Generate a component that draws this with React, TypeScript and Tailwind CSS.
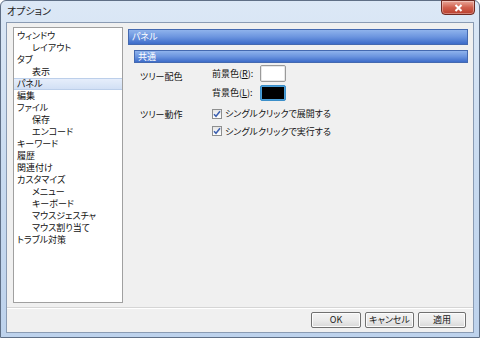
import React from "react";

const font = "[font-family:'Noto_Sans_CJK_JP','Noto_Sans',sans-serif] [font-feature-settings:'palt']";

type Item = { label: string; level: number; selected?: boolean };
const items: Item[] = [
  { label: "ウィンドウ", level: 0 },
  { label: "レイアウト", level: 1 },
  { label: "タブ", level: 0 },
  { label: "表示", level: 1 },
  { label: "パネル", level: 0, selected: true },
  { label: "編集", level: 0 },
  { label: "ファイル", level: 0 },
  { label: "保存", level: 1 },
  { label: "エンコード", level: 1 },
  { label: "キーワード", level: 0 },
  { label: "履歴", level: 0 },
  { label: "関連付け", level: 0 },
  { label: "カスタマイズ", level: 0 },
  { label: "メニュー", level: 1 },
  { label: "キーボード", level: 1 },
  { label: "マウスジェスチャ", level: 1 },
  { label: "マウス割り当て", level: 1 },
  { label: "トラブル対策", level: 0 },
];

function Check() {
  return (
    <span className="w-[10px] h-[10px] border border-[#8e8f8f] bg-gradient-to-b from-[#e6e6e6] to-[#ffffff] flex items-center justify-center shrink-0">
      <svg width="8" height="8" viewBox="0 0 8 8">
        <path d="M1 4.2 L3 6.3 L7 1.3" fill="none" stroke="#3b5fb0" strokeWidth="1.5" />
      </svg>
    </span>
  );
}

function Btn({ children, w }: { children: React.ReactNode; w: string }) {
  return (
    <div
      className={`${w} h-[16px] rounded-[2px] border border-[#707070] bg-gradient-to-b from-[#f3f3f3] via-[#ebebeb] to-[#d8d8d8] flex items-center justify-center text-[9px] text-[#1a1a1a] shadow-[inset_0_0_0_1px_#fcfcfc]`}
    >
      {children}
    </div>
  );
}

export default function App() {
  return (
    <div className={`${font} w-[480px] h-[338px] overflow-hidden bg-white`}>
      <div className="w-[480px] h-[338px] rounded-t-[6px] border border-[#5f6f86] bg-gradient-to-b from-[#dce8f6] via-[#c9dbf0] to-[#bdd2ec] flex flex-col">
        {/* title bar */}
        <div className="h-[21px] flex items-start justify-between shrink-0">
          <div className="pl-[6px] pt-[3px] text-[10px] leading-[14px] text-[#1e1e1e]">オプション</div>
          <div className="mr-[4px] mt-[-1px] w-[34px] h-[15px] rounded-b-[4px] border border-[#6e2a22] bg-gradient-to-b from-[#e8a597] via-[#d0604e] to-[#b93d2c] flex items-center justify-center shadow-[inset_0_0_0_1px_rgba(255,255,255,0.35)]">
            <svg width="9" height="8" viewBox="0 0 9 8">
              <path d="M1.5 1 L7.5 7 M7.5 1 L1.5 7" stroke="#ffffff" strokeWidth="2" />
            </svg>
          </div>
        </div>
        {/* client */}
        <div className="mx-[5px] mb-[4px] flex-1 border border-[#8a9bb3] bg-[#f0f0f0] flex flex-col">
          <div className="flex gap-[5px] pl-[6px] pr-[5px] pt-[4px]">
            {/* tree */}
            <div className="w-[110px] h-[276px] border border-[#a0a0a0] bg-white pt-[2px] shrink-0">
              {items.map((it) => (
                <div
                  key={it.label}
                  className={`h-[12px] flex items-center text-[9px] leading-[12px] text-[#111] ${
                    it.selected ? "bg-gradient-to-b from-[#e6eefb] to-[#d2e0f5] border-y border-[#bccfea]" : ""
                  } ${it.level === 1 ? "pl-[18px]" : "pl-[3px]"}`}
                >
                  {it.label}
                </div>
              ))}
            </div>
            {/* right panel */}
            <div className="flex-1 pt-[2px]">
              <div className="h-[16px] border border-[#4469b0] bg-gradient-to-b from-[#8fb3ec] via-[#6b94df] to-[#3d6cc9] flex items-center pl-[3px] text-[9px] text-white">
                パネル
              </div>
              <div className="ml-[6px] mt-[5px] h-[13px] border border-[#4469b0] bg-gradient-to-b from-[#8fb3ec] via-[#6b94df] to-[#3d6cc9] flex items-center pl-[3px] text-[9px] text-white">
                共通
              </div>
              <div className="ml-[12px] mt-[2px] text-[9px] text-[#111]">
                <div className="flex">
                  <div className="w-[72px] pt-[5px]">ツリー配色</div>
                  <div className="flex flex-col gap-[3px]">
                    <div className="flex items-center">
                      <div className="w-[48px]">
                        前景色(<span className="underline">R</span>):
                      </div>
                      <div className="w-[26px] h-[17px] rounded-[2px] border border-[#9a9a9a] bg-white shadow-[inset_0_0_0_1px_#e8e8e8]" />
                    </div>
                    <div className="flex items-center">
                      <div className="w-[48px]">
                        背景色(<span className="underline">L</span>):
                      </div>
                      <div className="w-[26px] h-[16px] rounded-[2px] border border-[#3c8fc9] bg-[#4b9fd8] p-[1px]">
                        <div className="w-full h-full bg-black" />
                      </div>
                    </div>
                  </div>
                </div>
                <div className="flex mt-[6px]">
                  <div className="w-[72px] pt-[1px]">ツリー動作</div>
                  <div className="flex flex-col gap-[4px]">
                    <div className="flex items-center gap-[3px]">
                      <Check />
                      <span>シングルクリックで展開する</span>
                    </div>
                    <div className="flex items-center gap-[3px]">
                      <Check />
                      <span>シングルクリックで実行する</span>
                    </div>
                  </div>
                </div>
              </div>
            </div>
          </div>
          <div className="mt-[4px] border-t border-[#d5d5d5] shadow-[inset_0_1px_0_#ffffff] flex-1 flex justify-end items-start gap-[4px] pr-[7px] pt-[4px]">
            <Btn w="w-[50px]">OK</Btn>
            <Btn w="w-[49px]">キャンセル</Btn>
            <Btn w="w-[48px]">適用</Btn>
          </div>
        </div>
      </div>
    </div>
  );
}
